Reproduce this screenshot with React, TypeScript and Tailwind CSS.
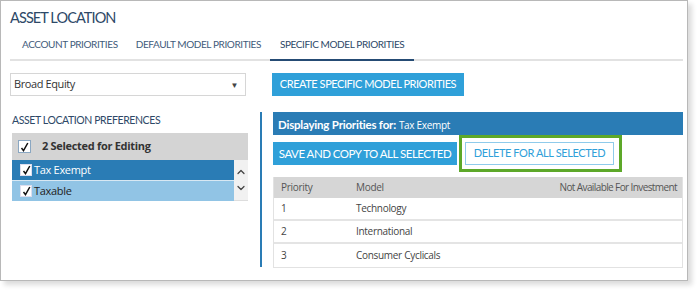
import { ChevronUp, ChevronDown } from 'lucide-react';

const lato = { fontFamily: 'Lato, "Open Sans", sans-serif' };

function Check({ className }: { className: string }) {
  return (
    <span className={`flex items-center justify-center bg-white border ${className}`}>
      <svg width="9" height="10" viewBox="0 0 9 10">
        <path d="M1.5 6 L3.5 8.6 L7.8 1" fill="none" stroke="#111" strokeWidth="1.5" />
      </svg>
    </span>
  );
}

const rows = [
  { p: '1', m: 'Technology' },
  { p: '2', m: 'International' },
  { p: '3', m: 'Consumer Cyclicals' },
];

export default function App() {
  return (
    <div className="w-[697px] h-[290px] bg-white font-['Open_Sans',sans-serif]">
      <div className="w-[688px] h-[281px] border border-[#b8b8b8] shadow-[4px_4px_5px_rgba(0,0,0,0.14)] pl-[9px] pr-[4px] pt-[8px]">
        <div className="text-[14.5px] leading-[18px] tracking-[-0.9px] text-[#2d4867]" style={lato}>ASSET LOCATION</div>

        <div className="flex mt-[10px] w-[673px] border-b-2 border-[#e2e2e2] text-[10px] tracking-[-0.4px] text-[#3f5b7a]" style={lato}>
          <div className="pl-[12px] pr-[9px] pb-[7px]">ACCOUNT PRIORITIES</div>
          <div className="px-[9px] pb-[7px]">DEFAULT MODEL PRIORITIES</div>
          <div className="px-[10px] pb-[7px] border-b-2 border-[#254b74] -mb-[2px] text-[#2d4867]">SPECIFIC MODEL PRIORITIES</div>
        </div>

        <div className="flex mt-[12px] h-[23px]">
          <div className="w-[236px] h-[23px] border border-[#d6d6d6] flex items-center justify-between pl-[3px] pr-[7px] text-[11px] tracking-[-0.4px] text-[#333]">
            <span>Broad Equity</span>
            <span className="text-[8px] text-[#444]">▼</span>
          </div>
          <div className="ml-[26px] w-[192px] h-[23px] bg-[#2fa0d9] text-white flex items-center justify-center text-[11px] tracking-[-0.45px] whitespace-nowrap" style={lato}>
            CREATE SPECIFIC MODEL PRIORITIES
          </div>
        </div>

        <div className="flex mt-[16px]">
          <div className="w-[238px] pl-[2px]">
            <div className="text-[10.5px] leading-[16px] tracking-[-0.4px] text-[#2d4867]" style={lato}>ASSET LOCATION PREFERENCES</div>
            <div className="mt-[5px] h-[27px] bg-[#d4d4d4] flex items-center pl-[6px] text-[11px] tracking-[-0.3px] font-bold text-[#333]">
              <Check className="w-[13px] h-[13px] border-[#8aa7c2]" />
              <span className="ml-[11px]">2 Selected for Editing</span>
            </div>
            <div className="flex">
              <div className="flex-1">
                <div className="h-[20px] bg-[#2a7cb5] flex items-center pl-[8px] text-white text-[11px] tracking-[-0.3px]">
                  <Check className="w-[12px] h-[12px] border-[#dde]" />
                  <span className="ml-[2px]">Tax Exempt</span>
                </div>
                <div className="h-[21px] border-t border-[#d8e8f3] bg-[#91c4e5] flex items-center pl-[8px] text-[#222] text-[11px] tracking-[-0.3px]">
                  <Check className="w-[12px] h-[12px] border-[#dde]" />
                  <span className="ml-[2px]">Taxable</span>
                </div>
              </div>
              <div className="w-[14px] bg-[#f1f1f1] border-b border-[#ddd] flex flex-col items-center justify-center gap-[4px] text-[#444]">
                <ChevronUp size={12} strokeWidth={2.5} />
                <ChevronDown size={12} strokeWidth={2.5} />
              </div>
            </div>
          </div>

          <div className="ml-[12px] w-[2px] h-[155px] bg-[#2a7cb5]" />

          <div className="ml-[11px] w-[410px]">
            <div className="h-[23px] bg-[#2a7cb5] flex items-baseline pt-[4px] pl-[5px] text-white">
              <span className="text-[11.5px] font-bold tracking-[-0.2px]" style={lato}>Displaying Priorities for:</span>
              <span className="ml-[3px] text-[10px] tracking-[-0.3px]">Tax Exempt</span>
            </div>

            <div className="flex mt-[7px] h-[23px]">
              <div className="w-[184px] h-[23px] bg-[#2fa0d9] text-white flex items-center justify-center text-[11.5px] tracking-[-0.5px] whitespace-nowrap" style={lato}>
                SAVE AND COPY TO ALL SELECTED
              </div>
              <div className="ml-[2px] -mt-[7px] h-[37px] border-[3px] border-[#5da829] pl-[3px] pr-[5px] pt-[4px]">
                <div className="w-[149px] h-[23px] border border-[#8fcbeb] text-[#2fa0d9] flex items-center justify-center text-[11px] tracking-[-0.4px] whitespace-nowrap" style={lato}>
                  DELETE FOR ALL SELECTED
                </div>
              </div>
            </div>

            <div className="mt-[12px] border-x border-b border-[#e2e2e2] text-[10px] tracking-[-0.3px] text-[#444]">
              <div className="h-[21px] bg-[#d6d6d6] flex items-center text-[#555]">
                <span className="w-[82px] pl-[7px]">Priority</span>
                <span className="flex-1">Model</span>
                <span className="pr-[5px] tracking-[-0.6px]">Not Available For Investment</span>
              </div>
              {rows.map((r, i) => (
                <div key={r.p} className={`h-[23px] flex items-center ${i < 2 ? 'border-b-2 border-[#e4e4e4]' : ''}`}>
                  <span className="w-[82px] pl-[7px]">{r.p}</span>
                  <span className="flex-1">{r.m}</span>
                </div>
              ))}
            </div>
          </div>
        </div>
      </div>
    </div>
  );
}
